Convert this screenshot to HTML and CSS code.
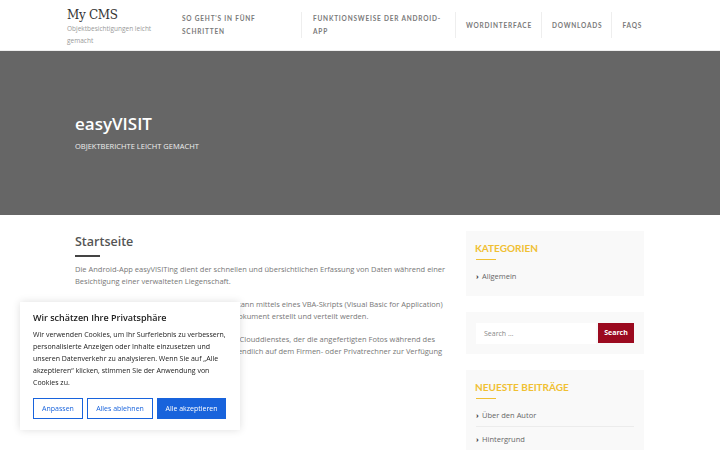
FILE: index.html
```html
<!DOCTYPE html>
<html lang="de">
<head>
<meta charset="utf-8">
<title>My CMS – easyVISIT</title>
<link rel="stylesheet" href="styles.css">
</head>
<body>
<header class="site-header">
  <div class="branding">
    <div class="site-title">My CMS</div>
    <div class="site-desc">Objektbesichtigungen leicht gemacht</div>
  </div>
  <nav class="main-nav">
    <a class="nav-item nav-item-a">SO GEHT'S IN FÜNF SCHRITTEN</a>
    <a class="nav-item nav-item-b">FUNKTIONSWEISE DER ANDROID-APP</a>
    <a class="nav-item">WORDINTERFACE</a>
    <a class="nav-item">DOWNLOADS</a>
    <a class="nav-item">FAQS</a>
  </nav>
</header>

<section class="hero">
  <h1 class="hero-title">easyVISIT</h1>
  <div class="hero-sub">OBJEKTBERICHTE LEICHT GEMACHT</div>
</section>

<div class="page-body">
  <main class="content">
    <h2 class="page-title">Startseite</h2>
    <div class="title-line"></div>
    <p>Die Android-App easyVISITing dient der schnellen und übersichtlichen Erfassung von Daten während einer Besichtigung einer verwalteten Liegenschaft.</p>
    <p>Der daraus resultierende Objektbericht selbst kann mittels eines VBA-Skripts (Visual Basic for Application) als übersichtliches, schön formatiertes Word-Dokument erstellt und verteilt werden.</p>
    <p>Die Übertragung erfolgt mittels eines externen Clouddienstes, der die angefertigten Fotos während des Besichtigungstermins speichert und anschliessendlich auf dem Firmen- oder Privatrechner zur Verfügung stellt.</p>
  </main>

  <aside class="sidebar">
    <section class="widget">
      <h3 class="widget-title">KATEGORIEN</h3>
      <div class="widget-line"></div>
      <ul class="widget-list">
        <li><span class="chev">›</span>Allgemein</li>
      </ul>
    </section>
    <section class="widget widget-search">
      <div class="search-input">Search …</div>
      <div class="search-btn">Search</div>
    </section>
    <section class="widget">
      <h3 class="widget-title">NEUESTE BEITRÄGE</h3>
      <div class="widget-line"></div>
      <ul class="widget-list widget-list-posts">
        <li class="sep"><span class="chev">›</span>Über den Autor</li>
        <li class="next"><span class="chev">›</span>Hintergrund</li>
      </ul>
    </section>
  </aside>
</div>

<div class="cookie">
  <div class="cookie-title">Wir schätzen Ihre Privatsphäre</div>
  <p class="cookie-text">Wir verwenden Cookies, um Ihr Surferlebnis zu verbessern, personalisierte Anzeigen oder Inhalte einzusetzen und unseren Datenverkehr zu analysieren. Wenn Sie auf „Alle akzeptieren“ klicken, stimmen Sie der Anwendung von Cookies zu.</p>
  <div class="cookie-btns">
    <button class="cbtn cbtn-a">Anpassen</button>
    <button class="cbtn cbtn-b">Alles ablehnen</button>
    <button class="cbtn cbtn-primary">Alle akzeptieren</button>
  </div>
</div>
</body>
</html>
```

FILE: styles.css
```css
* { box-sizing: border-box; }
html, body { margin: 0; padding: 0; }
body {
  font-family: "Open Sans", "Liberation Sans", sans-serif;
  background: #fff;
  color: #777;
  width: 720px;
  height: 450px;
  overflow: hidden;
}

.site-header {
  height: 51px;
  display: flex;
  align-items: center;
  padding-left: 67px;
  border-bottom: 1px solid #eee;
}
.branding { width: 90px; padding-top: 3px; }
.site-title {
  font-family: "DejaVu Serif", "Liberation Serif", serif;
  font-size: 12px;
  color: #333;
  line-height: 16px;
  letter-spacing: -0.3px;
}
.site-desc {
  font-size: 6.5px;
  color: #999;
  line-height: 12px;
}
.main-nav {
  display: flex;
  align-items: center;
  margin-left: 14px;
}
.nav-item {
  font-family: "Lato", "Open Sans", sans-serif;
  font-size: 6.5px;
  font-weight: 700;
  letter-spacing: 0.8px;
  line-height: 13px;
  color: #7a7a7a;
  padding: 0 9px 0 10px;
  border-left: 1px solid #eee;
  min-height: 26px;
  display: flex;
  align-items: center;
}
.nav-item:first-child { border-left: none; }
.nav-item-a { width: 130px; padding-left: 11px; }
.nav-item-b { width: 154px; padding-left: 11px; padding-right: 8px; }

.hero {
  height: 164px;
  background: #666;
  padding: 62px 75px 0;
  color: #fff;
}
.hero-title {
  margin: 0;
  font-size: 17px;
  font-weight: 600;
  line-height: 22px;
}
.hero-sub {
  margin-top: 6px;
  font-size: 7.5px;
  line-height: 10px;
  color: #eee;
}

.page-body {
  display: flex;
  gap: 16px;
  padding: 16px 76px 0 75px;
}
.content { flex: 1; padding-top: 3px; }
.page-title {
  margin: 0;
  font-size: 12.5px;
  line-height: 16px;
  font-weight: 600;
  color: #555;
}
.title-line {
  width: 25px;
  height: 1.5px;
  background: #444;
  margin: 5px 0 6px;
}
.content p {
  margin: 0 0 11px;
  font-size: 7.5px;
  line-height: 12px;
  color: #777;
}

.sidebar { width: 178px; }
.widget {
  background: #f9f9f9;
  padding: 10px 10px 14px;
  margin-bottom: 16px;
}
.widget-title {
  margin: 0;
  font-family: "Lato", "Open Sans", sans-serif;
  font-size: 10px;
  font-weight: 700;
  line-height: 14px;
  color: #f0c032;
  margin-left: -1px;
}
.widget-line {
  width: 20px;
  height: 1px;
  background: #f0c032;
  margin: 4px 0 10px;
}
.widget-list {
  list-style: none;
  margin: 0;
  padding: 0;
}
.widget-list-posts { margin-top: 1px; }
.widget-list li {
  font-size: 7.5px;
  line-height: 12px;
  color: #666;
}
.widget-list li.sep { padding-bottom: 5px; border-bottom: 1px solid #ececec; }
.widget-list li.next { padding-top: 6px; }
.chev {
  font-weight: 700;
  color: #333;
  display: inline-block;
  width: 6px;
}
.widget-search {
  display: flex;
  align-items: flex-start;
  padding: 11px 10px 10px;
  gap: 2px;
}
.search-input {
  width: 120px;
  height: 21px;
  background: #fff;
  font-size: 7px;
  color: #888;
  line-height: 21px;
  padding-left: 8px;
}
.search-btn {
  width: 36px;
  height: 20px;
  background: #9b0a1f;
  color: #fff;
  font-size: 7px;
  font-weight: 700;
  line-height: 20px;
  text-align: center;
}

.cookie {
  position: fixed;
  left: 20px;
  top: 302px;
  width: 220px;
  height: 128px;
  background: #fff;
  box-shadow: 0 0 8px rgba(0,0,0,0.13);
  padding: 10px 13px 0;
}
.cookie-title {
  font-size: 9px;
  font-weight: 600;
  line-height: 12px;
  color: #212121;
}
.cookie-text {
  margin: 5px 0 0;
  font-size: 7px;
  line-height: 12px;
  color: #212121;
}
.cookie-btns {
  display: flex;
  gap: 4px;
  margin-top: 9px;
}
.cbtn {
  font-family: "Open Sans", sans-serif;
  font-size: 7px;
  height: 21px;
  padding: 0;
  border: 1.5px solid #1863dc;
  background: #fff;
  color: #1863dc;
}
.cbtn-a { width: 50px; }
.cbtn-b { width: 66px; }
.cbtn-primary { width: 69px; background: #1863dc; color: #fff; }
```
